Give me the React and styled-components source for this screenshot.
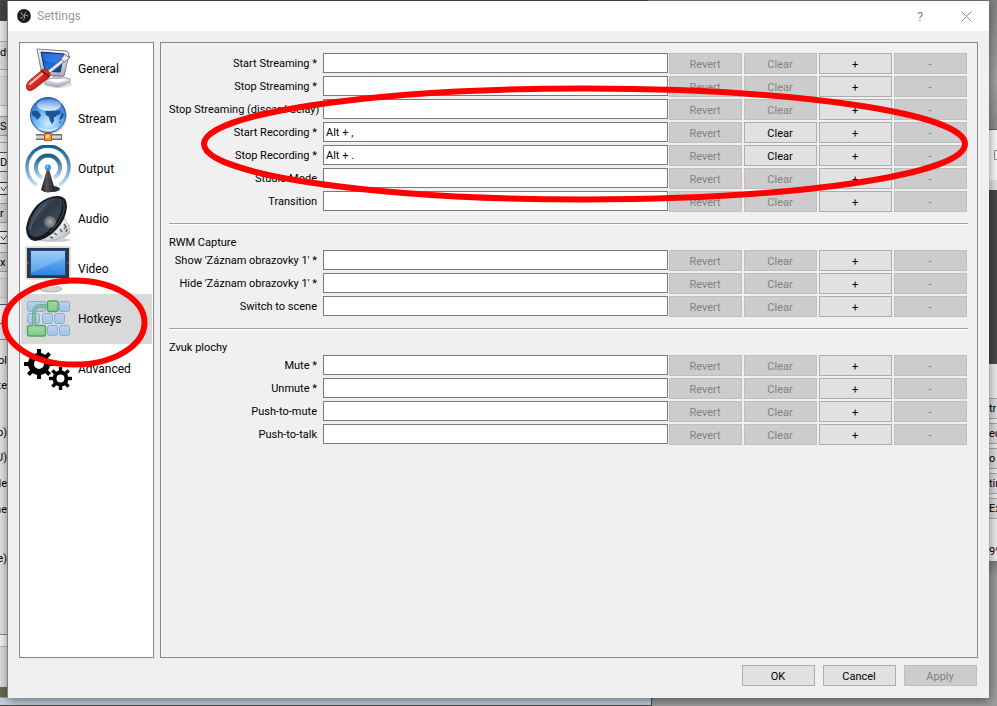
import React, { useState } from "react";
import styled, { createGlobalStyle, css } from "styled-components";

const groups = [
  {
    title: "",
    rows: [
      { label: "Start Streaming *", value: "" },
      { label: "Stop Streaming *", value: "" },
      { label: "Stop Streaming (discard delay)", value: "" },
      { label: "Start Recording *", value: "Alt + ," },
      { label: "Stop Recording *", value: "Alt + ." },
      { label: "Studio Mode", value: "" },
      { label: "Transition", value: "" },
    ],
  },
  {
    title: "RWM Capture",
    rows: [
      { label: "Show 'Záznam obrazovky 1' *", value: "" },
      { label: "Hide 'Záznam obrazovky 1' *", value: "" },
      { label: "Switch to scene", value: "" },
    ],
  },
  {
    title: "Zvuk plochy",
    rows: [
      { label: "Mute *", value: "" },
      { label: "Unmute *", value: "" },
      { label: "Push-to-mute", value: "" },
      { label: "Push-to-talk", value: "" },
    ],
  },
];

// slices of the main window that stick out on both sides of the dialog
const leftSlices = [
  { h: 20, bg: "#454442" },
  { h: 20, bg: "#ececec" },
  { h: 22, bg: "#dcdcdc", line: "#a8a8a8", text: "dy", start: true },
  { h: 6, bg: "#dcdcdc" },
  { h: 7, bg: "#e6e6e6", line: "#a8a8a8" },
  { h: 29, bg: "#dedede", line: "#c4c4c4" },
  { h: 11, bg: "#ededed", line: "#b4b4b4" },
  { h: 20, bg: "#d4d4d4", box: "#9a9a9a", text: "S", start: true },
  { h: 6, bg: "#e6e6e6" },
  { h: 10, bg: "#e6e6e6", line: "#a0a0a0" },
  { h: 20, bg: "#eeeeee", box: "#555", text: "D", start: true },
  { h: 10, bg: "#e2e2e2" },
  { h: 13, bg: "#eeeeee", box: "#333", check: true },
  { h: 8, bg: "#e2e2e2" },
  { h: 20, bg: "#d0d0d0", box: "#9a9a9a", text: "r", start: true },
  { h: 8, bg: "#e2e2e2" },
  { h: 13, bg: "#eeeeee", box: "#333", check: true },
  { h: 8, bg: "#e2e2e2" },
  { h: 20, bg: "#d0d0d0", box: "#9a9a9a", text: "x", start: true },
  { h: 6, bg: "#e2e2e2" },
  { h: 20, bg: "#dadada", box: "#c0c0c0" },
  { h: 6, bg: "#e2e2e2" },
  { h: 20, bg: "#eeeeee", box: "#555" },
  { h: 15, bg: "#e2e2e2" },
  { h: 12, bg: "#e2e2e2", line: "#828790" },
  { h: 18, bg: "#e2e2e2", text: "ol" },
  { h: 7, bg: "#e2e2e2" },
  { h: 18, bg: "#e2e2e2", text: "te" },
  { h: 29, bg: "#e2e2e2" },
  { h: 18, bg: "#e2e2e2", text: "o)" },
  { h: 7, bg: "#e2e2e2" },
  { h: 18, bg: "#e2e2e2", text: "U)" },
  { h: 8, bg: "#e2e2e2" },
  { h: 18, bg: "#e2e2e2", text: "le" },
  { h: 8, bg: "#e2e2e2" },
  { h: 18, bg: "#e2e2e2", text: "ne" },
  { h: 31, bg: "#e2e2e2" },
  { h: 18, bg: "#e2e2e2", text: "e)" },
  { h: 67, bg: "#e2e2e2" },
  { h: 12, bg: "#f4f4f4", line: "#828790" },
  { h: 41, bg: "#dedede", line: "#b8b8b8" },
  { h: 10, bg: "#6b6658" },
];

const rightSlices = [
  { h: 128, bg: "linear-gradient(#838383, #a2a2a2 60%, #8c8c8c)" },
  { h: 51, bg: "#fafafa", line: "#606060", maximize: true },
  { h: 10, bg: "#e4e4e4" },
  { h: 174, bg: "#474747" },
  { h: 34, bg: "#ececec" },
  { h: 21, bg: "#dcdcdc", box: "#a8a8a8", text: "tr" },
  { h: 4, bg: "#ececec" },
  { h: 21, bg: "#dcdcdc", box: "#a8a8a8", text: "ec" },
  { h: 4, bg: "#ececec" },
  { h: 21, bg: "#dcdcdc", box: "#a8a8a8", text: "o l" },
  { h: 4, bg: "#ececec" },
  { h: 21, bg: "#dcdcdc", box: "#a8a8a8", text: "tin" },
  { h: 4, bg: "#ececec" },
  { h: 21, bg: "#dcdcdc", box: "#a8a8a8", text: "Exi" },
  { h: 22, bg: "#ececec" },
  { h: 20, bg: "#ececec", text: "9%" },
  { h: 137, bg: "linear-gradient(#7c7c7c, #9c9c9c 16px, #9c9c9c)" },
];

const GeneralIcon = () => (
  <svg width="48" height="48" viewBox="0 0 48 48">
    <defs>
      <linearGradient id="genScreen" x1="0" y1="0" x2="1" y2="1">
        <stop offset="0" stopColor="#0a3fa8" />
        <stop offset="0.5" stopColor="#1d6fe0" />
        <stop offset="1" stopColor="#0b2f92" />
      </linearGradient>
      <linearGradient id="genHandle" x1="0" y1="0" x2="1" y2="1">
        <stop offset="0" stopColor="#ff8a78" />
        <stop offset="0.5" stopColor="#d92a1e" />
        <stop offset="1" stopColor="#8c0d08" />
      </linearGradient>
      <linearGradient id="genCase" x1="0" y1="0" x2="0" y2="1">
        <stop offset="0" stopColor="#f4f5f8" />
        <stop offset="1" stopColor="#a9aeba" />
      </linearGradient>
    </defs>
    <ellipse cx="34" cy="39" rx="14" ry="4" fill="#00000022" />
    <path d="M21 35 35 31 46 34 46 37 34 42 21 39Z" fill="url(#genCase)" stroke="#9ba0ab" />
    <path d="M24 35 35 33 43 35 33 38Z" fill="#fff" />
    <path d="M29 28h8l1 6h-9z" fill="#b5bac5" />
    <path d="M13 4 43 6 45 9 40 31 18 30Z" fill="url(#genCase)" stroke="#7b808b" />
    <path d="M17 7 40 9 36 27 21 26Z" fill="url(#genScreen)" stroke="#162d68" />
    <path d="M18 8 39 10 37 17Q27 19 20 15Z" fill="#3f8df0" opacity="0.5" />
    <path d="M21 30 41 14" stroke="#8c9099" strokeWidth="4" />
    <path d="M21 30 41 14" stroke="#f3f4f6" strokeWidth="2" />
    <path d="M37 14 41 9 44 12 46 11 45 14 40 17Z" fill="#e4e6ea" stroke="#747984" />
    <path d="M17 26Q21 22 25 27Q28 31 23 34L10 44Q5 47 3 44Q1 40 5 36Z" fill="url(#genHandle)" stroke="#a5261c" />
    <path d="M6 39 18 29" stroke="#ffc4ba" strokeWidth="2" strokeLinecap="round" />
    <path d="M17 25 25 32" stroke="#7d120c" strokeWidth="1.5" />
  </svg>
);

const StreamIcon = () => (
  <svg width="48" height="48" viewBox="0 0 48 48">
    <defs>
      <radialGradient id="globe" cx="0.5" cy="0.75" r="0.75">
        <stop offset="0" stopColor="#cfecff" />
        <stop offset="0.5" stopColor="#72b4f5" />
        <stop offset="1" stopColor="#1f61c8" />
      </radialGradient>
      <linearGradient id="globeShine" x1="0" y1="0" x2="0" y2="1">
        <stop offset="0" stopColor="#fff" stopOpacity="0.2" />
        <stop offset="1" stopColor="#fff" stopOpacity="0.8" />
      </linearGradient>
    </defs>
    <path d="M12 42h26" stroke="#73706a" strokeWidth="6" />
    <path d="M12 42h25" stroke="#d8d6d0" strokeWidth="3" />
    <path d="M24 36v6" stroke="#8b8983" strokeWidth="4" />
    <circle cx="25" cy="21" r="18" fill="#00000033" />
    <circle cx="24" cy="20" r="17.5" fill="url(#globe)" stroke="#1e58b4" />
    <path d="M8 16Q11 15 14 16L17 20 16 22 14 24 13 25 11 22 8 20Z" fill="#1c5590" />
    <path d="M21 16Q26 14 31 16L35 15 37 17 35 20 33 20 32 22 30 22 30 26 28 29 26 26 25 22 22 20Z" fill="#1c5590" />
    <path d="M38 17l2 3-2 4-3 1zM35 27l2-1v3z" fill="#1c5590" />
    <ellipse cx="25" cy="10" rx="12" ry="6" fill="url(#globeShine)" />
    <path d="M15 33Q24 38 33 33" stroke="#e6f6ff" strokeWidth="2" fill="none" opacity="0.7" />
    <rect x="20.5" y="38.5" width="7" height="7" fill="#ff9d2c" stroke="#cf4e12" />
    <rect x="22" y="40" width="3" height="3" fill="#ffe27c" />
  </svg>
);

const OutputIcon = () => (
  <svg width="48" height="48" viewBox="0 0 48 48">
    <defs>
      <linearGradient id="wave" x1="0" y1="0" x2="0" y2="1">
        <stop offset="0" stopColor="#125f90" />
        <stop offset="0.6" stopColor="#6fa3c7" />
        <stop offset="1" stopColor="#c9deed" />
      </linearGradient>
      <linearGradient id="mast" x1="0" y1="0" x2="1" y2="0">
        <stop offset="0" stopColor="#1b1b1b" />
        <stop offset="0.4" stopColor="#555" />
        <stop offset="1" stopColor="#1e1e1e" />
      </linearGradient>
    </defs>
    <path d="M13 40A21 21 0 1 1 35 40" fill="none" stroke="url(#wave)" strokeWidth="3.4" />
    <path d="M18 33A12 12 0 1 1 30 33" fill="none" stroke="url(#wave)" strokeWidth="4" />
    <ellipse cx="29" cy="44" rx="7" ry="3" fill="#26374a" />
    <path d="M23 24h2l6 21Q24 50 17 45Z" fill="url(#mast)" />
    <circle cx="24" cy="22.5" r="3" fill="#2f9af0" />
    <circle cx="23.3" cy="21.8" r="1" fill="#9dd7ff" />
  </svg>
);

const AudioIcon = () => (
  <svg width="48" height="48" viewBox="0 0 48 48">
    <defs>
      <linearGradient id="cone" x1="0" y1="0" x2="1" y2="1">
        <stop offset="0" stopColor="#5d6f84" />
        <stop offset="0.45" stopColor="#2f3a48" />
        <stop offset="1" stopColor="#4b5a6b" />
      </linearGradient>
      <radialGradient id="coneCap">
        <stop offset="0" stopColor="#c6c6c6" />
        <stop offset="1" stopColor="#6b6e73" />
      </radialGradient>
      <linearGradient id="magnet" x1="0" y1="0" x2="1" y2="1">
        <stop offset="0" stopColor="#8f969c" />
        <stop offset="0.5" stopColor="#f2f4f5" />
        <stop offset="1" stopColor="#a3a8ac" />
      </linearGradient>
    </defs>
    <ellipse cx="30" cy="45" rx="16" ry="2" fill="#00000030" />
    <path d="M40 22 42 27 45 30 46 38 41 42 30 45 16 45Z" fill="url(#magnet)" stroke="#b5babd" />
    <path d="M40 29l2 3-2 2M36 34l2 3M30 38l3 2M43 34l-1 3M26 42l3 1" stroke="#5c6165" strokeWidth="1.5" fill="none" />
    <path d="M34 1Q43 1 43 12Q42 24 33 34Q23 45 11 46Q2 45 2 33Q4 20 13 10Q23 1 34 1Z" fill="#17191b" />
    <path d="M32 3Q39 3 38 12Q36 23 28 32Q19 42 10 42Q4 40 4 32Q7 20 15 11Q23 3 32 3Z" fill="url(#cone)" />
    <path d="M36 4Q41 6 40 15Q37 27 26 37" fill="none" stroke="#4b5158" />
    <circle cx="26" cy="27" r="6" fill="url(#coneCap)" opacity="0.8" />
    <path d="M6 35Q9 20 23 8" stroke="#718294" fill="none" opacity="0.6" />
  </svg>
);

const VideoIcon = () => (
  <svg width="48" height="48" viewBox="0 0 48 48">
    <defs>
      <linearGradient id="panel" x1="0" y1="0" x2="0" y2="1">
        <stop offset="0" stopColor="#7fc2f7" />
        <stop offset="1" stopColor="#2c83e6" />
      </linearGradient>
    </defs>
    <ellipse cx="27" cy="44" rx="11" ry="3" fill="#d2d2d2" stroke="#b2b2b2" />
    <path d="M20 34h11l1 8H19z" fill="#e3e3e3" />
    <rect x="1.5" y="1.5" width="45" height="33" rx="1" fill="#d7d7d7" stroke="#e2e2e2" />
    <rect x="3" y="3" width="42" height="30" fill="#333638" />
    <rect x="6.5" y="5.5" width="35" height="25" fill="url(#panel)" stroke="#174b87" />
    <path d="M7 6H41V13L7 28Z" fill="#fff" opacity="0.2" />
    <path d="M4 17v2M44 17v2" stroke="#777" />
  </svg>
);

const blueKeys = [
  [3.5, 6.5, 18],
  [35.5, 6.5, 10],
  [3.5, 18.5, 12],
  [18.5, 18.5, 10],
  [30.5, 18.5, 10],
  [23.5, 30.5, 10],
  [35.5, 30.5, 10],
];

const HotkeysIcon = () => (
  <svg width="48" height="48" viewBox="0 0 48 48">
    <defs>
      <linearGradient id="keyBlue" x1="0" y1="0" x2="0" y2="1">
        <stop offset="0" stopColor="#b8d2ed" />
        <stop offset="1" stopColor="#a2c5ea" />
      </linearGradient>
      <linearGradient id="keyGreen" x1="0" y1="0" x2="0" y2="1">
        <stop offset="0" stopColor="#a7d8aa" />
        <stop offset="1" stopColor="#83c98c" />
      </linearGradient>
    </defs>
    {blueKeys.map(([x, y, w]) => (
      <rect key={`${x}-${y}`} x={x} y={y} width={w} height="10" rx="2" fill="url(#keyBlue)" stroke="#8dabcd" />
    ))}
    <rect x="23.5" y="6" width="10.5" height="10.5" rx="2" fill="url(#keyGreen)" stroke="#4ba65e" strokeWidth="1.4" />
    <rect x="3.5" y="30.5" width="18" height="10.5" rx="2" fill="url(#keyGreen)" stroke="#4ba65e" strokeWidth="1.4" />
    <path d="M23 11H16Q10 11 10 18V31" fill="none" stroke="#69a888" strokeWidth="4" opacity="0.8" />
    <path d="M23 11H16Q10 11 10 18V31" fill="none" stroke="#86bfa6" strokeWidth="2" />
  </svg>
);

const Gear = ({ x, y, r, body, hole, tooth }) => (
  <g transform={`translate(${x} ${y})`}>
    <circle r={(body + hole) / 2} fill="none" stroke="#000" strokeWidth={body - hole} />
    {[0, 45, 90, 135, 180, 225, 270, 315].map((a) => (
      <rect key={a} x={-tooth / 2} y={-r} width={tooth} height={r - body + 1} transform={`rotate(${a})`} />
    ))}
  </g>
);

const AdvancedIcon = () => (
  <svg width="48" height="48" viewBox="0 0 48 48">
    <Gear x={15} y={19} r={15} body={11} hole={5} tooth={4} />
    <Gear x={36.5} y={33.5} r={11.5} body={8} hole={4} tooth={3.4} />
  </svg>
);

const ObsLogo = () => (
  <svg width="14" height="14" viewBox="0 0 14 14">
    <circle cx="7" cy="7" r="6.9" fill="#1d1b1c" />
    <path
      d="M4 3Q4 6 7 6.6M11.2 7Q8.6 5.4 7 7M6 11.4Q8.2 10 7.4 7M3 9Q5.6 9.4 6.6 7.4M9.4 3.2Q7.4 4 7.4 6.4"
      fill="none"
      stroke="#b9b7b8"
      strokeWidth="0.8"
    />
  </svg>
);

const pages = [
  { name: "General", Icon: GeneralIcon },
  { name: "Stream", Icon: StreamIcon },
  { name: "Output", Icon: OutputIcon },
  { name: "Audio", Icon: AudioIcon },
  { name: "Video", Icon: VideoIcon },
  { name: "Hotkeys", Icon: HotkeysIcon },
  { name: "Advanced", Icon: AdvancedIcon },
];

const Slices = ({ items, side }) => (
  <SliceColumn $side={side} aria-hidden="true">
    {items.map((s, i) => (
      <Slice key={i} $h={s.h} $bg={s.bg} $line={s.line} $box={s.box} $end={side === "left" && !s.start}>
        {s.text}
        {s.check && (
          <svg width="8" height="9" viewBox="0 0 8 9">
            <path d="M1 3 4 7 8 2" fill="none" stroke="#222" />
          </svg>
        )}
        {s.maximize && (
          <svg width="8" height="12" viewBox="0 0 8 12">
            <path d="M8 1.5H5.5V10.5H8" fill="none" stroke="#888" />
          </svg>
        )}
      </Slice>
    ))}
  </SliceColumn>
);

const HotkeyRow = ({ id, label, value, onChange }) => (
  <Row>
    <RowLabel htmlFor={id}>{label}</RowLabel>
    <HotkeyInput id={id} type="text" value={value} onChange={(e) => onChange(e.target.value)} />
    <RowButtons>
      <PushButton disabled>Revert</PushButton>
      <PushButton disabled={value === ""} onClick={() => onChange("")}>
        Clear
      </PushButton>
      <PushButton>+</PushButton>
      <PushButton disabled>-</PushButton>
    </RowButtons>
  </Row>
);

const App = () => {
  const [page, setPage] = useState("Hotkeys");
  const [hotkeys, setHotkeys] = useState(groups);

  const handleChange = (g, r) => (value) => {
    setHotkeys((pre) =>
      pre.map((group, gi) =>
        gi !== g
          ? group
          : {
              ...group,
              rows: group.rows.map((row, ri) => (ri === r ? { ...row, value } : row)),
            }
      )
    );
  };

  return (
    <Desktop>
      <GlobalStyle />
      <TopEdge />
      <Slices items={leftSlices} side="left" />
      <Dialog>
        <TitleBar>
          <ObsLogo />
          <Title>Settings</Title>
          <TitleButton aria-label="Help">?</TitleButton>
          <TitleButton aria-label="Close">
            <svg width="11" height="11" viewBox="0 0 11 11">
              <path d="M0.5 0.5 10.5 10.5M10.5 0.5 0.5 10.5" stroke="#8c8c8c" />
            </svg>
          </TitleButton>
        </TitleBar>
        <Body>
          <PageList>
            {pages.map(({ name, Icon }) => (
              <li key={name}>
                <PageButton $active={page === name} onClick={() => setPage(name)}>
                  <Icon />
                  {name}
                </PageButton>
              </li>
            ))}
          </PageList>
          <Content>
            {hotkeys.map((group, g) => (
              <Group key={g}>
                {group.title && <GroupTitle>{group.title}</GroupTitle>}
                <Rows>
                  {group.rows.map((row, r) => (
                    <HotkeyRow
                      key={row.label}
                      id={`hotkey-${g}-${r}`}
                      label={row.label}
                      value={row.value}
                      onChange={handleChange(g, r)}
                    />
                  ))}
                </Rows>
              </Group>
            ))}
          </Content>
        </Body>
        <Footer>
          <PushButton>OK</PushButton>
          <PushButton>Cancel</PushButton>
          <PushButton disabled>Apply</PushButton>
        </Footer>
      </Dialog>
      <Slices items={rightSlices} side="right" />
      <BottomEdge>
        <WindowBottom />
      </BottomEdge>
      <Annotations width="997" height="706" viewBox="0 0 997 706">
        <ellipse cx="584.5" cy="144" rx="380.5" ry="55.5" />
        <ellipse cx="74.5" cy="322.5" rx="70" ry="42" />
      </Annotations>
    </Desktop>
  );
};

export default App;

const GlobalStyle = createGlobalStyle`
  * {
    box-sizing: border-box;
  }
  body {
    margin: 0;
    font-family: Roboto, "Noto Sans", sans-serif;
    font-size: 11px;
    color: #000;
  }
  button, input {
    font: inherit;
    color: inherit;
  }
`;

const Desktop = styled.div`
  position: relative;
  display: grid;
  grid-template-columns: 8px minmax(0, 1fr) 8px;
  grid-template-rows: 1px minmax(0, 1fr) 8px;
  height: 100vh;
  overflow: hidden;
  background: #9c9c9c;
`;

const TopEdge = styled.div`
  grid-column: 1 / -1;
  background: linear-gradient(to right, #4a4846 65%, #7d7d7d 65%);
`;

const SliceColumn = styled.div`
  display: flex;
  flex-direction: column;
  overflow: hidden;
  ${({ $side }) =>
    $side === "left" &&
    css`
      border-right: 1px solid #a6a6a6;
    `}
`;

const Slice = styled.div`
  flex: none;
  display: flex;
  align-items: center;
  justify-content: ${({ $end }) => ($end ? "flex-end" : "flex-start")};
  height: ${({ $h }) => $h}px;
  overflow: hidden;
  white-space: nowrap;
  background: ${({ $bg }) => $bg};
  ${({ $line }) =>
    $line &&
    css`
      border-top: 1px solid ${$line};
    `}
  ${({ $box }) =>
    $box &&
    css`
      border: solid ${$box};
      border-width: 1px 0;
    `}
`;

const Dialog = styled.main`
  display: flex;
  flex-direction: column;
  background: #f0f0f0;
  box-shadow: 0 2px 10px rgba(0, 0, 0, 0.5);
  z-index: 1;
`;

const TitleBar = styled.header`
  display: flex;
  align-items: center;
  height: 30px;
  padding-left: 9px;
  background: #fff;
`;

const Title = styled.h1`
  flex: 1;
  margin: 0 0 0 6px;
  font-size: 12px;
  font-weight: normal;
  color: #999;
`;

const TitleButton = styled.button`
  display: flex;
  align-items: center;
  justify-content: center;
  width: 46px;
  height: 30px;
  padding: 0;
  border: none;
  background: none;
  font-size: 13px;
  color: #8c8c8c;
`;

const Body = styled.div`
  flex: 1;
  display: flex;
  gap: 6px;
  min-height: 0;
  padding: 11px 11px 0;
`;

const PageList = styled.ul`
  flex: none;
  width: 135px;
  margin: 0;
  padding: 1px;
  list-style: none;
  background: #fff;
  border: 1px solid #828790;
`;

const PageButton = styled.button`
  display: flex;
  align-items: center;
  gap: 6px;
  width: 100%;
  height: 50px;
  padding: 0 3px;
  border: none;
  background: ${({ $active }) => ($active ? "#d9d9d9" : "transparent")};
  font-size: 12px;
  text-align: left;

  svg {
    flex: none;
  }
`;

const Content = styled.div`
  flex: 1;
  min-width: 0;
  padding: 10px 9px 10px 8px;
  border: 1px solid #828790;
`;

const Group = styled.section`
  & + & {
    margin-top: 11px;
    padding-top: 11px;
    border-top: 1px solid #a0a0a0;
    box-shadow: inset 0 1px #fff;
  }
`;

const GroupTitle = styled.h2`
  margin: 0;
  padding-top: 1px;
  font-size: 11px;
  font-weight: normal;
  line-height: 14px;
`;

const Rows = styled.div`
  display: flex;
  flex-direction: column;
  gap: 2px;
  padding-right: 1px;
`;

const Row = styled.div`
  display: grid;
  grid-template-columns: 148px minmax(0, 1fr) auto;
  height: 21px;
`;

const RowLabel = styled.label`
  line-height: 22px;
  text-align: right;
  white-space: nowrap;
`;

const HotkeyInput = styled.input`
  height: 20px;
  margin: 0 1px 0 6px;
  padding: 1px 2px 0;
  border: 1px solid #7a7a7a;
  border-radius: 0;
  outline: none;
  background: #fff;
`;

const RowButtons = styled.div`
  display: flex;
  gap: 2px;
`;

const PushButton = styled.button`
  width: 73px;
  height: 21px;
  padding: 1px 1px 0 0;
  border: 1px solid #adadad;
  background: #e1e1e1;

  &:disabled {
    border-color: #bfbfbf;
    background: #cccccc;
    color: #838383;
  }
`;

const Footer = styled.footer`
  display: flex;
  justify-content: flex-end;
  gap: 8px;
  padding: 7px 12px 12px;
`;

const BottomEdge = styled.div`
  grid-column: 1 / -1;
  background: #9c9c9c;
`;

const WindowBottom = styled.div`
  width: 652px;
  height: 8px;
  border: solid #444;
  border-width: 0 1px 1px 0;
  background: #c3d0e0;
`;

const Annotations = styled.svg`
  position: absolute;
  top: 0;
  left: 0;
  z-index: 2;
  pointer-events: none;
  fill: none;
  stroke: #fe0000;
  stroke-width: 6px;
`;
